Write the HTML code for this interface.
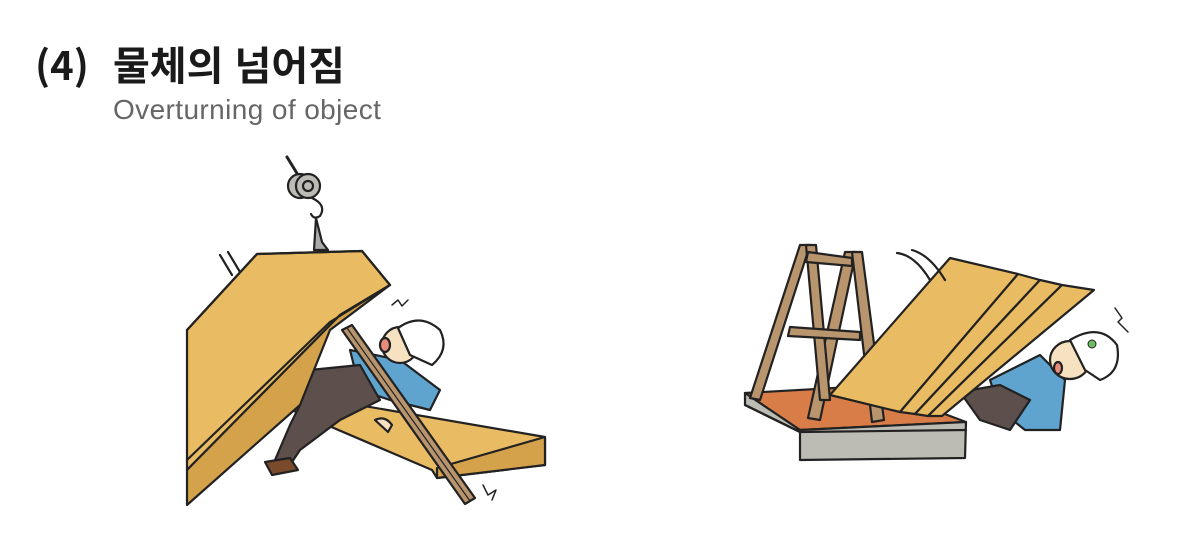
<!DOCTYPE html>
<html><head><meta charset="utf-8">
<style>
html,body{margin:0;padding:0;background:#fff;}
body{width:1196px;height:552px;position:relative;overflow:hidden;font-family:"Liberation Sans","Noto Sans CJK KR",sans-serif;}
.t1{position:absolute;left:35px;top:38px;font-size:40px;line-height:50px;font-weight:bold;color:#1a1a1a;white-space:nowrap;}
.t1 .p{display:inline-block;width:78px;font-family:"Noto Sans CJK KR",sans-serif;}
.t2{position:absolute;left:113px;top:94px;font-size:28px;color:#666;white-space:nowrap;letter-spacing:0.4px;}
svg{position:absolute;left:0;top:0;}
</style></head><body>
<div class="t1"><span class="p">(4)</span>물체의 넘어짐</div>
<div class="t2">Overturning of object</div>
<svg width="1196" height="552" viewBox="0 0 1196 552" stroke="#222" stroke-width="2.2" stroke-linejoin="round" stroke-linecap="round">
<line x1="287" y1="157" x2="298" y2="175" stroke-width="3"/>
<circle cx="300" cy="186" r="12" fill="#bdbbb5"/>
<circle cx="308" cy="186" r="12" fill="#bdbbb5"/>
<circle cx="308" cy="186" r="5" fill="#bdbbb5"/>
<path d="M312 198 Q327 205 320 216 Q314 220 311 214" fill="none"/>
<path d="M316 218 L322 242 L328 250 L314 250 Z" fill="#aaa"/>
<path d="M220 255 L232 275 M228 252 L240 272" fill="none"/>
<path d="M280 405 L300 395 L545 437 L545 465 L437 478 L432 470 Z" fill="#e9bb63"/>
<path d="M437 478 L437 468 L545 437 L545 465 Z" fill="#d4a24b"/>
<path d="M350 350 L400 360 L440 390 L430 410 L390 400 L360 390 Z" fill="#5fa3cf"/>
<path d="M310 370 L360 365 L380 400 L340 420 L300 450 L290 465 L275 460 L290 425 L300 405 Z" fill="#5d4f4b"/>
<path d="M265 462 L290 458 L298 470 L272 475 Z" fill="#7a4a2c"/>
<path d="M375 420 Q385 415 392 425 L388 432 Z" fill="#f6e2c0"/>
<circle cx="400" cy="345" r="18" fill="#f6e2c0"/>
<path d="M398 328 Q420 312 440 330 Q450 350 432 365 L410 355 Z" fill="#fff"/>
<ellipse cx="385" cy="345" rx="5" ry="7" fill="#e88c7a"/>
<path d="M187 330 L257 254 L362 251 L390 285 L340 315 L187 470 Z" fill="#e9bb63"/>
<path d="M390 285 L340 315 L187 470 L187 505 L300 405 L330 330 Z" fill="#d4a24b"/>
<path d="M187 330 L257 254 L362 251 L390 285 L330 322 L187 460" fill="none"/>
<path d="M342 330 L352 325 L475 498 L465 504 Z" fill="#b9956e"/>
<line x1="347" y1="328" x2="470" y2="501" stroke-width="1.2"/>
<path d="M483 485 L488 495 L496 490 L492 500" fill="none" stroke-width="1.5"/>
<path d="M392 305 L398 300 L402 306 L408 300" fill="none" stroke-width="1.5"/>
<path d="M745 393 L870 386 L966 422 L800 430 Z" fill="#d97d48"/>
<path d="M745 393 L745 405 L800 432 L800 460 L965 458 L966 422 L800 430 Z" fill="#bdbcb4"/>
<path d="M745 405 L800 432 L966 430" fill="none"/>
<path d="M800 245 L810 245 L760 400 L750 398 Z" fill="#b9956e"/>
<path d="M845 252 L856 252 L820 420 L808 418 Z" fill="#b9956e"/>
<path d="M852 252 L862 252 L884 420 L872 422 Z" fill="#b9956e"/>
<path d="M806 245 L816 245 L830 400 L820 400 Z" fill="#b9956e"/>
<path d="M808 252 L852 258 L852 266 L806 262 Z" fill="#b9956e"/>
<path d="M790 327 L860 332 L860 340 L788 336 Z" fill="#b9956e"/>
<path d="M1040 355 L1065 380 L1060 430 L1025 430 L1000 410 L990 380 Z" fill="#5fa3cf"/>
<path d="M960 392 L1000 385 L1030 400 L1010 430 L980 420 Z" fill="#5d4f4b"/>
<ellipse cx="1070" cy="360" rx="20" ry="19" fill="#f6e2c0"/>
<path d="M1070 340 Q1100 322 1117 345 Q1122 372 1100 380 L1085 370 Z" fill="#fff"/>
<circle cx="1092" cy="344" r="4" fill="#6dbd64" stroke-width="1"/>
<ellipse cx="1058" cy="368" rx="4" ry="6" fill="#e88c7a"/>
<path d="M1115 308 L1122 318 L1118 322 L1128 332" fill="none" stroke-width="1.5"/>
<path d="M830 395 L950 258 L1018 274 L900 412 Z" fill="#e9bb63"/>
<path d="M900 412 L1018 274 L1040 280 L915 414 Z" fill="#e9bb63"/>
<path d="M915 414 L1040 280 L1062 285 L928 416 Z" fill="#e9bb63"/>
<path d="M928 416 L1062 285 L1094 290 L942 416 Z" fill="#e9bb63"/>
<path d="M897 253 Q915 255 930 280 M912 250 Q930 255 945 280" fill="none"/>
</svg>
</body></html>
